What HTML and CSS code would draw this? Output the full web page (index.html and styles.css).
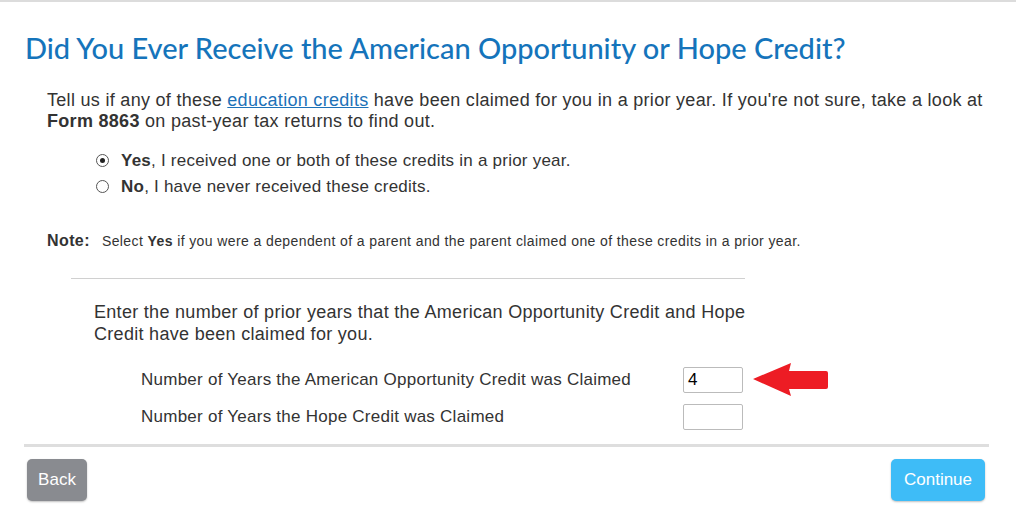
FILE: index.html
```html
<!DOCTYPE html>
<html>
<head>
<meta charset="utf-8">
<link rel="stylesheet" href="styles.css">
</head>
<body>
<div class="topline"></div>
<div class="page">
  <h1 class="title">Did You Ever Receive the American Opportunity or Hope Credit?</h1>
  <p class="intro">Tell us if any of these <a href="#" class="link">education credits</a> have been claimed for you in a prior year. If you're not sure, take a look at <b>Form 8863</b> on past-year tax returns to find out.</p>
  <div class="radios">
    <label class="radio"><span class="dot checked"></span><span><b>Yes</b>, I received one or both of these credits in a prior year.</span></label>
    <label class="radio"><span class="dot"></span><span><b>No</b>, I have never received these credits.</span></label>
  </div>
  <div class="note"><span class="note-label">Note:</span><span class="note-text">Select <b>Yes</b> if you were a dependent of a parent and the parent claimed one of these credits in a prior year.</span></div>
  <div class="sep"></div>
  <p class="enter">Enter the number of prior years that the American Opportunity Credit and Hope Credit have been claimed for you.</p>
  <div class="rows">
    <div class="row">
      <span class="row-label">Number of Years the American Opportunity Credit was Claimed</span>
      <span class="field">4</span>
      <svg class="arrow" width="76" height="34" viewBox="0 0 76 34"><path d="M1 16 L39 0 L37 8 L74 8 Q76 8 76 10 L76 24 Q76 26 74 26 L37 26 L39 33 Z" fill="#ed1c24"/></svg>
    </div>
    <div class="row">
      <span class="row-label">Number of Years the Hope Credit was Claimed</span>
      <span class="field"></span>
    </div>
  </div>
  <div class="footer">
    <button class="btn back">Back</button>
    <button class="btn cont">Continue</button>
  </div>
</div>
</body>
</html>
```
FILE: styles.css
```css
html, body { margin: 0; padding: 0; background: #fff; }
body { font-family: "Liberation Sans", Arial, sans-serif; color: #333; width: 1016px; height: 525px; overflow: hidden; }
.topline { height: 2px; background: #dcdcdc; }
.page { padding: 0 27px 0 24px; }
.title { font-family: Lato, "Open Sans", sans-serif; font-weight: 500; font-size: 29px; line-height: 32px; color: #1574bb; margin: 30px 0 0 1px; }
.intro { margin: 26px 0 0 23px; font-size: 18px; line-height: 21px; letter-spacing: 0.3px; width: 945px; }
.link { color: #1d72b8; text-decoration: underline; }
.radios { margin: 18px 0 0 72px; display: flex; flex-direction: column; gap: 5px; }
.radio { display: flex; align-items: center; font-size: 17px; line-height: 21px; letter-spacing: 0.23px; gap: 12px; }
.dot { width: 11px; height: 11px; border: 1px solid #555; border-radius: 50%; display: flex; align-items: center; justify-content: center; box-sizing: content-box; }
.dot.checked::after { content: ""; width: 5px; height: 5px; border-radius: 50%; background: #222; }
.note { margin: 35px 0 0 23px; display: flex; align-items: baseline; gap: 12px; }
.note-label { font-weight: bold; font-size: 16px; letter-spacing: 0.4px; }
.note-text { font-size: 14px; letter-spacing: 0.4px; }
.sep { margin: 28px 0 0 47px; width: 674px; height: 1px; background: #d0d0d0; }
.enter { margin: 22px 0 0 70px; width: 665px; font-size: 18px; line-height: 22px; letter-spacing: 0.3px; }
.rows { margin: 22px 0 0 117px; display: flex; flex-direction: column; gap: 11px; }
.row { display: flex; align-items: center; height: 26px; }
.row-label { width: 542px; font-size: 17px; letter-spacing: 0.25px; }
.field { width: 54px; height: 24px; border: 1px solid #bbb; border-radius: 2px; font-size: 17px; line-height: 24px; padding-left: 4px; box-sizing: content-box; color: #000; }
.arrow { margin: -4px 0 -4px 9px; }
.footer { margin-top: 14px; border-top: 3px solid #dedede; padding-top: 12px; display: flex; justify-content: space-between; padding-left: 3px; padding-right: 4px; }
.btn { border: none; border-radius: 5px; color: #fff; font-family: "Liberation Sans", Arial, sans-serif; font-size: 17px; height: 42px; box-shadow: 0 1px 2px rgba(0,0,0,0.25); }
.back { background: #898b90; width: 60px; }
.cont { background: #3ebcf7; width: 94px; }
```
